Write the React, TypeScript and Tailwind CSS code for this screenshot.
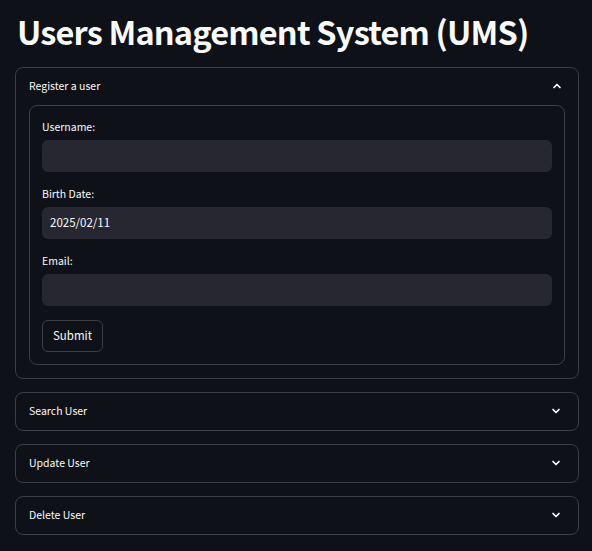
import React from 'react';

const Chevron = ({ up }: { up?: boolean }) => (
  <svg width="12" height="12" viewBox="0 0 12 12" fill="none" className="text-[#fafafa]">
    <polyline
      points={up ? '3,7.5 6,4.5 9,7.5' : '3,4.5 6,7.5 9,4.5'}
      stroke="currentColor"
      strokeWidth="1.7"
      strokeLinecap="round"
      strokeLinejoin="round"
    />
  </svg>
);

const Field = ({ label, value }: { label: string; value?: string }) => (
  <div className="flex flex-col">
    <label className="h-[16px] leading-[16px] text-[10.5px] text-[#fafafa] mb-[5px]">{label}</label>
    <div className="h-[32px] rounded-[6px] bg-[#262730] flex items-center px-[8px] text-[11.5px] text-[#fafafa]">
      {value}
    </div>
  </div>
);

const Collapsed = ({ title }: { title: string }) => (
  <div className="h-[39px] rounded-[8px] border border-[#3b3e45] flex items-center justify-between pl-[13px] pr-[16px] pb-[2px] text-[10.5px] text-[#fafafa]">
    <span>{title}</span>
    <Chevron />
  </div>
);

export default function App() {
  return (
    <div className="min-h-[551px] bg-[#0e1117] pl-[15px] pr-[13px] pb-[17px] font-['Noto_Sans_CJK_SC',sans-serif]">
      <h1 className="h-[67px] pt-[11px] pl-[2px] text-[32.5px] leading-[40px] tracking-[-0.025em] font-bold text-[#fafafa]">
        Users Management System (UMS)
      </h1>

      <div className="flex flex-col gap-[13px]">
        <div className="rounded-[8px] border border-[#3b3e45]">
          <div className="h-[37px] flex items-center justify-between pl-[13px] pr-[15px] pb-[2px] text-[10.5px] text-[#fafafa]">
            <span>Register a user</span>
            <Chevron up />
          </div>
          <div className="px-[13px] pb-[13px]">
            <div className="rounded-[8px] border border-[#3b3e45] px-[12px] pt-[13px] pb-[12px] flex flex-col gap-[14px]">
              <Field label="Username:" />
              <Field label="Birth Date:" value="2025/02/11" />
              <Field label="Email:" />
              <div>
                <button className="h-[32px] px-[10px] rounded-[6px] border border-[#3b3e45] text-[11.5px] text-[#fafafa]">
                  Submit
                </button>
              </div>
            </div>
          </div>
        </div>
        <Collapsed title="Search User" />
        <Collapsed title="Update User" />
        <Collapsed title="Delete User" />
      </div>
    </div>
  );
}
